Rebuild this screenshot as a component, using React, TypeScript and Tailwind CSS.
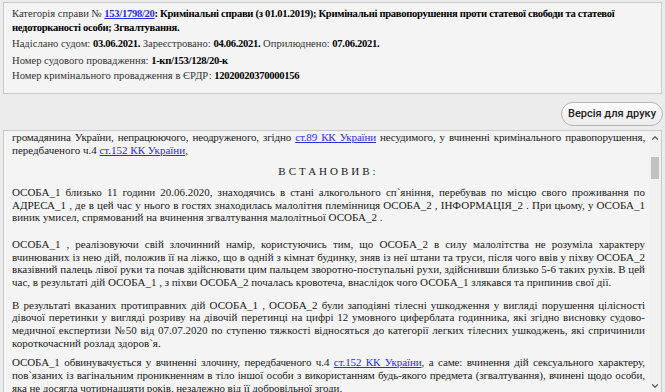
import { ChevronDown, ChevronUp } from 'lucide-react';

const serif = "font-['Liberation_Serif','Times_New_Roman',serif]";

function Link({ children }: { children: React.ReactNode }) {
  return <a className="text-[#2b2be6] underline">{children}</a>;
}

function B({ children }: { children: React.ReactNode }) {
  return <b className="tracking-[-0.3px] text-black">{children}</b>;
}

function CaseInfo() {
  return (
    <div className={`${serif} mx-[3px] mt-[2px] border border-[#c9c9c9] bg-[#f4f4f4] px-[8px] pt-[4px] pb-[10px] text-[10.6px] text-[#333]`}>
      <p className="leading-[14px]">
        Категорія справи №{' '}
        <a className="font-bold tracking-[-0.3px] text-[#2b2be6] underline">153/1798/20</a>
        <B>
          : Кримінальні справи (з 01.01.2019); Кримінальні правопорушення проти статевої свободи та статевої
          недоторканості особи; Згвалтування.
        </B>
      </p>
      <p className="mt-[2px] leading-[14px]">
        Надіслано судом: <B>03.06.2021.</B> Зареєстровано: <B>04.06.2021.</B> Оприлюднено: <B>07.06.2021.</B>
      </p>
      <p className="mt-[3px] leading-[14px]">
        Номер судового провадження: <B>1-кп/153/128/20-к</B>
      </p>
      <p className="mt-[1px] leading-[14px]">
        Номер кримінального провадження в ЄРДР: <B>12020020370000156</B>
      </p>
    </div>
  );
}

function Scrollbar() {
  return (
    <div className="flex w-[12px] shrink-0 flex-col items-center bg-[#f1f1f1]">
      <ChevronUp className="mt-[2px] h-[10px] w-[10px] text-[#606060]" strokeWidth={3} />
      <div className="mt-[14px] h-[22px] w-[8px] bg-[#c1c1c1]" />
      <div className="flex-1" />
      <ChevronDown className="mb-[2px] h-[10px] w-[10px] text-[#606060]" strokeWidth={3} />
    </div>
  );
}

export default function App() {
  return (
    <div className="h-[392px] w-[665px] overflow-hidden bg-[#ececec]">
      <CaseInfo />
      <div className="flex justify-end pr-[2px] pt-[8px] pb-[4px]">
        <button className="h-[24px] w-[102px] rounded-full border border-[#b5b5b5] bg-gradient-to-b from-[#fdfdfd] to-[#ececec] font-['Roboto',Arial,sans-serif] text-[11px] font-medium text-[#222]">
          Версія для друку
        </button>
      </div>
      <div className="mx-[3px] flex h-[264px] border border-[#c9c9c9] bg-[#f4f4f4]">
        <div className={`${serif} flex-1 overflow-hidden pl-[8px] pr-[4px] text-justify text-[11px] leading-[12.65px] text-[#1a1a1a]`}>
          <p className="tracking-[-0.15px] [text-align-last:justify]">
            громадянина України, непрацюючого, неодруженого, згідно <Link>ст.89 КК України</Link> несудимого, у
            вчиненні кримінального правопорушення,
          </p>
          <p>
            передбаченого ч.4 <Link>ст.152 КК України</Link>,
          </p>
          <p className="mt-[9px] text-center tracking-[3px]">ВСТАНОВИВ:</p>
          <p className="mt-[8px]">
            ОСОБА_1 близько 11 години 20.06.2020, знаходячись в стані алкогольного сп`яніння, перебував по місцю
            свого проживання по АДРЕСА_1 , де в цей час у нього в гостях знаходилась малолітня племінниця ОСОБА_2 ,
            ІНФОРМАЦІЯ_2 . При цьому, у ОСОБА_1 виник умисел, спрямований на вчинення згвалтування малолітньої
            ОСОБА_2 .
          </p>
          <p className="mt-[14px]">
            ОСОБА_1 , реалізовуючи свій злочинний намір, користуючись тим, що ОСОБА_2 в силу малолітства не
            розуміла характеру вчинюваних із нею дій, положив її на ліжко, що в одній з кімнат будинку, зняв із неї
            штани та труси, після чого ввів у піхву ОСОБА_2 вказівний палець лівої руки та почав здійснювати цим
            пальцем зворотно-поступальні рухи, здійснивши близько 5-6 таких рухів. В цей час, в результаті дій
            ОСОБА_1 , з піхви ОСОБА_2 почалась кровотеча, внаслідок чого ОСОБА_1 злякався та припинив свої дії.
          </p>
          <p className="mt-[10px]">
            В результаті вказаних протиправних дій ОСОБА_1 , ОСОБА_2 були заподіяні тілесні ушкодження у вигляді
            порушення цілісності дівочої перетинки у вигляді розриву на дівочій перетинці на цифрі 12 умовного
            циферблата годинника, які згідно висновку судово-медичної експертизи №50 від 07.07.2020 по ступеню
            тяжкості відносяться до категорії легких тілесних ушкоджень, які спричинили короткочасний розлад
            здоров`я.
          </p>
          <p className="mt-[7px] tracking-[-0.1px]">
            ОСОБА_1 обвинувачується у вчиненні злочину, передбаченого ч.4 <Link>ст.152 КК України</Link>, а саме:
            вчинення дій сексуального характеру, пов`язаних із вагінальним проникненням в тіло іншої особи з
            використанням будь-якого предмета (згвалтування), вчинені щодо особи, яка не досягла чотирнадцяти
            років, незалежно від її добровільної згоди.
          </p>
        </div>
        <Scrollbar />
      </div>
    </div>
  );
}
